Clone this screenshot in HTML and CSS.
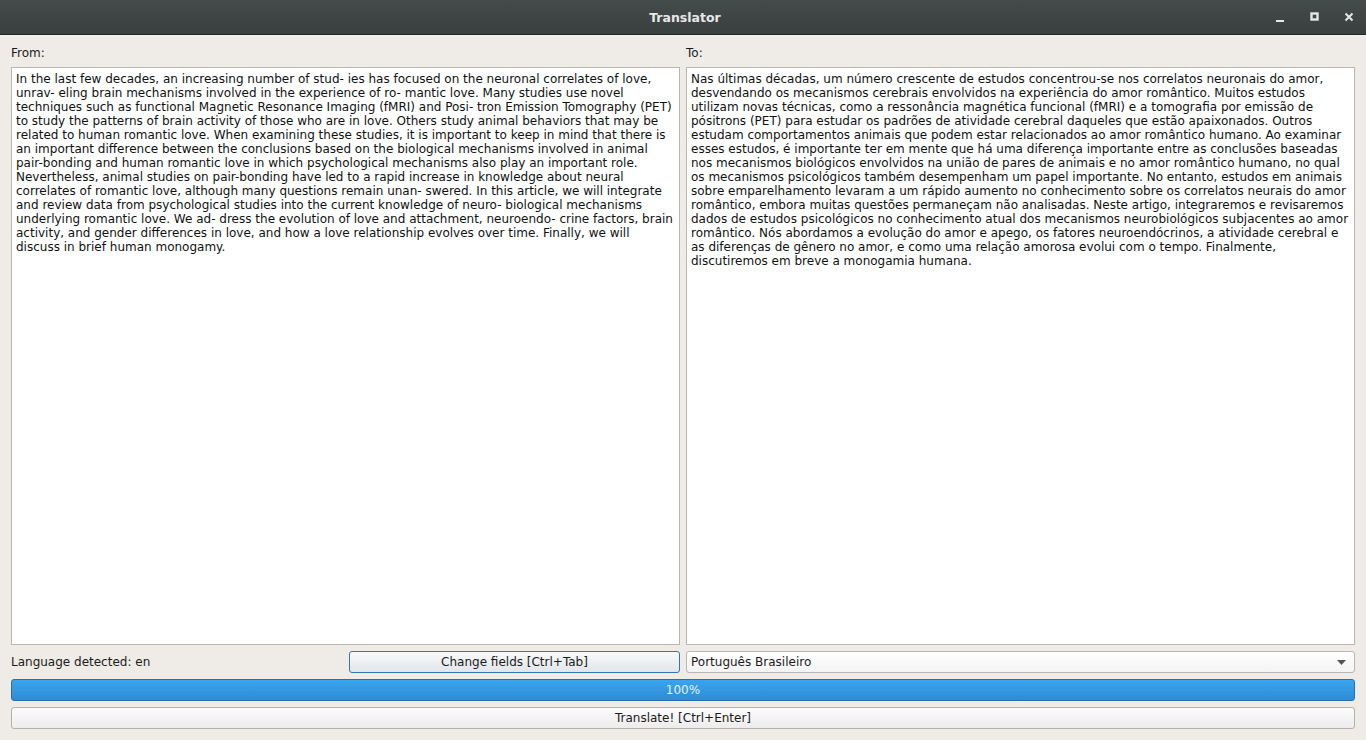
FILE: index.html
```html
<!DOCTYPE html>
<html>
<head>
<meta charset="utf-8">
<title>Translator</title>
<link rel="stylesheet" href="styles.css">
</head>
<body>
<div class="window">
  <header class="titlebar">
    <div class="title">Translator</div>
    <div class="controls">
      <span class="ctl ctl-min"><svg width="10" height="10" viewBox="0 0 10 10"><rect x="1" y="7" width="8" height="2" fill="#e6e6e6"/></svg></span>
      <span class="ctl ctl-max"><svg width="10" height="10" viewBox="0 0 10 10"><rect x="1.5" y="1.5" width="6" height="6" fill="none" stroke="#e6e6e6" stroke-width="2.4"/></svg></span>
      <span class="ctl ctl-close"><svg width="10" height="10" viewBox="0 0 10 10"><path d="M1.5 1.5 L8.5 8.5 M8.5 1.5 L1.5 8.5" stroke="#e6e6e6" stroke-width="2"/></svg></span>
    </div>
  </header>
  <main class="content">
    <div class="panes">
      <section class="pane">
        <label class="label">From:</label>
        <div class="textbox">In the last few decades, an increasing number of stud- ies has focused on the neuronal correlates of love,
unrav- eling brain mechanisms involved in the experience of ro- mantic love. Many studies use novel
techniques such as functional Magnetic Resonance Imaging (fMRI) and Posi- tron Emission Tomography (PET)
to study the patterns of brain activity of those who are in love. Others study animal behaviors that may be
related to human romantic love. When examining these studies, it is important to keep in mind that there is
an important difference between the conclusions based on the biological mechanisms involved in animal
pair-bonding and human romantic love in which psychological mechanisms also play an important role.
Nevertheless, animal studies on pair-bonding have led to a rapid increase in knowledge about neural
correlates of romantic love, although many questions remain unan- swered. In this article, we will integrate
and review data from psychological studies into the current knowledge of neuro- biological mechanisms
underlying romantic love. We ad- dress the evolution of love and attachment, neuroendo- crine factors, brain
activity, and gender differences in love, and how a love relationship evolves over time. Finally, we will
discuss in brief human monogamy.</div>
      </section>
      <section class="pane">
        <label class="label">To:</label>
        <div class="textbox">Nas últimas décadas, um número crescente de estudos concentrou-se nos correlatos neuronais do amor,
desvendando os mecanismos cerebrais envolvidos na experiência do amor romântico. Muitos estudos
utilizam novas técnicas, como a ressonância magnética funcional (fMRI) e a tomografia por emissão de
pósitrons (PET) para estudar os padrões de atividade cerebral daqueles que estão apaixonados. Outros
estudam comportamentos animais que podem estar relacionados ao amor romântico humano. Ao examinar
esses estudos, é importante ter em mente que há uma diferença importante entre as conclusões baseadas
nos mecanismos biológicos envolvidos na união de pares de animais e no amor romântico humano, no qual
os mecanismos psicológicos também desempenham um papel importante. No entanto, estudos em animais
sobre emparelhamento levaram a um rápido aumento no conhecimento sobre os correlatos neurais do amor
romântico, embora muitas questões permaneçam não analisadas. Neste artigo, integraremos e revisaremos
dados de estudos psicológicos no conhecimento atual dos mecanismos neurobiológicos subjacentes ao amor
romântico. Nós abordamos a evolução do amor e apego, os fatores neuroendócrinos, a atividade cerebral e
as diferenças de gênero no amor, e como uma relação amorosa evolui com o tempo. Finalmente,
discutiremos em breve a monogamia humana.</div>
      </section>
    </div>
    <div class="row">
      <div class="row-left">
        <span class="detected">Language detected: en</span>
        <button class="btn btn-focus">Change fields [Ctrl+Tab]</button>
      </div>
      <div class="combo">
        <span>Português Brasileiro</span>
        <svg class="arrow" width="9" height="5" viewBox="0 0 9 5"><path d="M0 0 H9 L4.5 5 Z" fill="#555"/></svg>
      </div>
    </div>
    <div class="progress"><span>100%</span></div>
    <button class="btn btn-wide">Translate! [Ctrl+Enter]</button>
  </main>
</div>
</body>
</html>
```

FILE: styles.css
```css
* { box-sizing: border-box; }
html, body { margin: 0; padding: 0; }
body {
  width: 1366px;
  height: 740px;
  overflow: hidden;
  font-family: "DejaVu Sans", "Liberation Sans", sans-serif;
  font-size: 12px;
  color: #1b1b1b;
  background: #efebe7;
}
.window { display: flex; flex-direction: column; height: 740px; }
.titlebar {
  height: 35px;
  flex: none;
  display: flex;
  align-items: center;
  justify-content: center;
  position: relative;
  background: linear-gradient(#444b4b, #3a3f3f);
  border-bottom: 1px solid #232626;
}
.title {
  color: #e8e8e8;
  font-weight: bold;
  font-size: 12.5px;
  padding-left: 4px;
}
.controls {
  position: absolute;
  right: 0;
  top: 0;
  height: 34px;
  display: flex;
  align-items: center;
}
.ctl { width: 35px; display: flex; justify-content: center; align-items: center; }
.ctl-min { margin-top: 2px; }
.ctl-close { width: 34px; }
.content {
  flex: 1;
  display: flex;
  flex-direction: column;
  gap: 6px;
  padding: 11px 11px 11px 11px;
}
.panes {
  flex: 1;
  display: grid;
  grid-template-columns: 1fr 1fr;
  column-gap: 6px;
}
.pane { display: flex; flex-direction: column; gap: 6px; }
.label { height: 15px; line-height: 15px; color: #1b1b1b; }
.textbox {
  flex: 1;
  background: #fff;
  border: 1px solid #bab6b1;
  padding: 4px 4px;
  white-space: pre;
  line-height: 14px;
  overflow: hidden;
  color: #111;
}
.row {
  height: 22px;
  display: grid;
  grid-template-columns: 1fr 1fr;
  column-gap: 6px;
}
.row-left { display: flex; align-items: center; justify-content: space-between; }
.btn {
  font-family: inherit;
  font-size: 12px;
  color: #1b1b1b;
  height: 22px;
  border: 1px solid #b4b0ab;
  border-radius: 3px;
  background: linear-gradient(#fcfcfc, #ececec);
  padding: 0 8px;
}
.btn-focus {
  width: 331px;
  border-color: #3674ad;
  background: linear-gradient(#f8f9fa, #e2e6ea);
}
.btn-wide { width: 100%; height: 22px; flex: none; }
.combo {
  height: 22px;
  display: flex;
  align-items: center;
  justify-content: space-between;
  padding: 0 8px 0 4px;
  border: 1px solid #bab6b1;
  border-radius: 3px;
  background: linear-gradient(#ffffff, #f3f3f3);
}
.arrow { display: block; }
.progress {
  height: 22px;
  flex: none;
  display: flex;
  align-items: center;
  justify-content: center;
  border: 1px solid #2b6ea6;
  border-radius: 3px;
  background: linear-gradient(#3aa5ee, #2f8bd5);
  color: #e9f3fb;
}
```
